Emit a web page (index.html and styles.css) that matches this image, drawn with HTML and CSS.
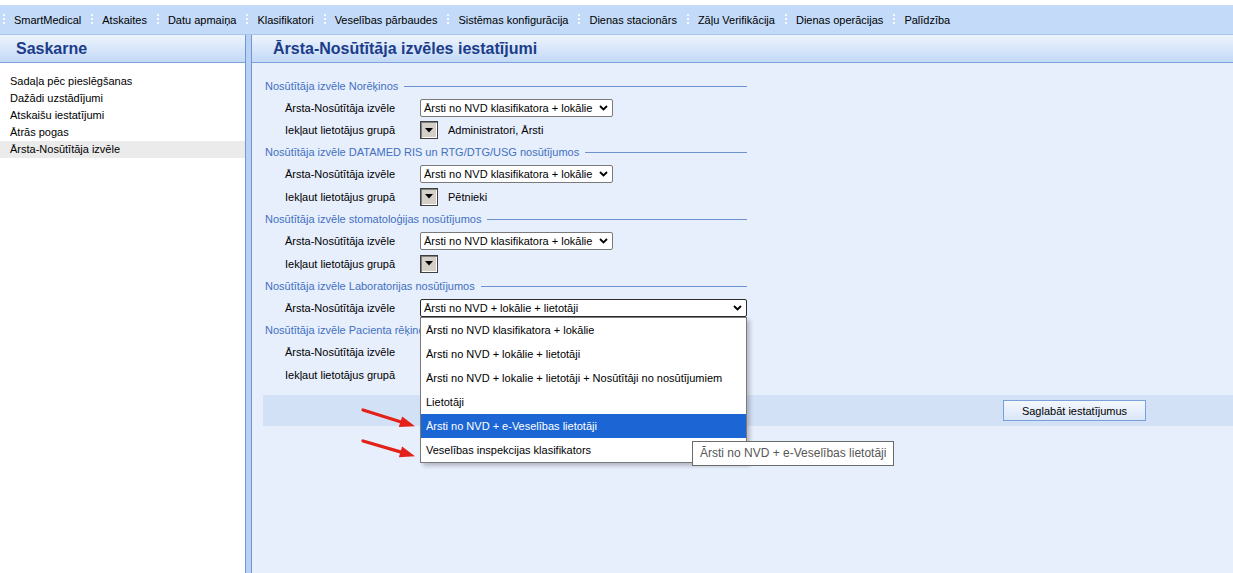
FILE: index.html
```html
<!DOCTYPE html>
<html lang="lv">
<head>
<meta charset="utf-8">
<title>Ārsta-Nosūtītāja izvēles iestatījumi</title>
<link rel="stylesheet" href="styles.css">
</head>
<body>
<nav class="menubar">
  <span class="menu-sep"></span><span class="menu-item">SmartMedical</span>
  <span class="menu-sep"></span><span class="menu-item">Atskaites</span>
  <span class="menu-sep"></span><span class="menu-item">Datu apmaiņa</span>
  <span class="menu-sep"></span><span class="menu-item">Klasifikatori</span>
  <span class="menu-sep"></span><span class="menu-item">Veselības pārbaudes</span>
  <span class="menu-sep"></span><span class="menu-item">Sistēmas konfigurācija</span>
  <span class="menu-sep"></span><span class="menu-item">Dienas stacionārs</span>
  <span class="menu-sep"></span><span class="menu-item">Zāļu Verifikācija</span>
  <span class="menu-sep"></span><span class="menu-item">Dienas operācijas</span>
  <span class="menu-sep"></span><span class="menu-item">Palīdzība</span>
</nav>
<div class="main">
  <aside class="left">
    <div class="panel-head">Saskarne</div>
    <ul class="nav-list">
      <li>Sadaļa pēc pieslēgšanas</li>
      <li>Dažādi uzstādījumi</li>
      <li>Atskaišu iestatījumi</li>
      <li>Ātrās pogas</li>
      <li class="active">Ārsta-Nosūtītāja izvēle</li>
    </ul>
  </aside>
  <div class="splitter"></div>
  <section class="right">
    <div class="panel-head right-head">Ārsta-Nosūtītāja izvēles iestatījumi</div>
    <div class="content">
      <div class="group">
        <div class="legend">Nosūtītāja izvēle Norēķinos</div>
        <div class="row"><span class="label">Ārsta-Nosūtītāja izvēle</span>
          <div class="select"><span>Ārsti no NVD klasifikatora + lokālie</span><svg class="chev" width="9" height="6" viewBox="0 0 9 6"><polyline points="1,1 4.5,4.5 8,1" fill="none" stroke="#000" stroke-width="1.8"/></svg></div></div>
        <div class="row row-grp"><span class="label">Iekļaut lietotājus grupā</span>
          <span class="ddbtn"><svg width="8" height="5" viewBox="0 0 8 5"><polygon points="0,0 8,0 4,4.5" fill="#000"/></svg></span><span class="grp-text">Administratori, Ārsti</span></div>
      </div>
      <div class="group">
        <div class="legend">Nosūtītāja izvēle DATAMED RIS un RTG/DTG/USG nosūtījumos</div>
        <div class="row"><span class="label">Ārsta-Nosūtītāja izvēle</span>
          <div class="select"><span>Ārsti no NVD klasifikatora + lokālie</span><svg class="chev" width="9" height="6" viewBox="0 0 9 6"><polyline points="1,1 4.5,4.5 8,1" fill="none" stroke="#000" stroke-width="1.8"/></svg></div></div>
        <div class="row row-grp"><span class="label">Iekļaut lietotājus grupā</span>
          <span class="ddbtn"><svg width="8" height="5" viewBox="0 0 8 5"><polygon points="0,0 8,0 4,4.5" fill="#000"/></svg></span><span class="grp-text">Pētnieki</span></div>
      </div>
      <div class="group">
        <div class="legend">Nosūtītāja izvēle stomatoloģijas nosūtījumos</div>
        <div class="row"><span class="label">Ārsta-Nosūtītāja izvēle</span>
          <div class="select"><span>Ārsti no NVD klasifikatora + lokālie</span><svg class="chev" width="9" height="6" viewBox="0 0 9 6"><polyline points="1,1 4.5,4.5 8,1" fill="none" stroke="#000" stroke-width="1.8"/></svg></div></div>
        <div class="row row-grp"><span class="label">Iekļaut lietotājus grupā</span>
          <span class="ddbtn"><svg width="8" height="5" viewBox="0 0 8 5"><polygon points="0,0 8,0 4,4.5" fill="#000"/></svg></span></div>
      </div>
      <div class="group">
        <div class="legend">Nosūtītāja izvēle Laboratorijas nosūtījumos</div>
        <div class="row"><span class="label">Ārsta-Nosūtītāja izvēle</span>
          <div class="select-wrap">
            <div class="select select-wide"><span>Ārsti no NVD + lokālie + lietotāji</span><svg class="chev" width="9" height="6" viewBox="0 0 9 6"><polyline points="1,1 4.5,4.5 8,1" fill="none" stroke="#000" stroke-width="1.8"/></svg></div>
            <ul class="dropdown">
              <li>Ārsti no NVD klasifikatora + lokālie</li>
              <li>Ārsti no NVD + lokālie + lietotāji</li>
              <li>Ārsti no NVD + lokalie + lietotāji + Nosūtītāji no nosūtījumiem</li>
              <li>Lietotāji</li>
              <li class="hl">Ārsti no NVD + e-Veselības lietotāji</li>
              <li>Veselības inspekcijas klasifikators</li>
            </ul>
            <div class="tooltip">Ārsti no NVD + e-Veselības lietotāji</div>
          </div>
        </div>
      </div>
      <div class="group">
        <div class="legend">Nosūtītāja izvēle Pacienta rēķinos</div>
        <div class="row"><span class="label">Ārsta-Nosūtītāja izvēle</span>
          <div class="select"></div></div>
        <div class="row row-grp"><span class="label">Iekļaut lietotājus grupā</span>
          <span class="ddbtn"></span></div>
      </div>
      <div class="actions"><button class="save-btn" type="button">Saglabāt iestatījumus</button></div>
    </div>
    <svg class="arrows" width="62" height="62" viewBox="0 0 62 62">
      <line x1="5" y1="8" x2="44" y2="20.2" stroke="#e32119" stroke-width="3.2" stroke-linecap="round"/>
      <polygon points="57,24.3 40.8,25 44.2,14.4" fill="#e32119"/>
      <line x1="5" y1="39" x2="44" y2="50.4" stroke="#e32119" stroke-width="3.2" stroke-linecap="round"/>
      <polygon points="57,54.3 40.9,55.2 44.1,44.6" fill="#e32119"/>
    </svg>
  </section>
</div>
</body>
</html>
```
FILE: styles.css
```css
* { box-sizing: border-box; }
html, body { margin: 0; height: 100%; }
body {
  font-family: "Liberation Sans", Arial, sans-serif;
  font-size: 11px;
  color: #000;
  background: #fff;
  padding-top: 5px;
  overflow: hidden;
}

.menubar {
  height: 30px;
  background: #c3dbf8;
  border-bottom: 1px solid #a8c5ee;
  display: flex;
  align-items: center;
  padding-left: 3px;
}
.menu-sep {
  width: 2px;
  height: 12px;
  background: repeating-linear-gradient(to bottom, #f7faff 0 2px, transparent 2px 4px);
  border-left: 1px solid transparent;
}
.menu-item { padding: 0 10px 0 9px; white-space: nowrap; }

.main { display: flex; height: calc(100% - 30px); }
.left { width: 245px; background: #fff; flex: none; }
.splitter {
  width: 7px;
  flex: none;
  background: #b9d2f4;
  border-left: 1px solid #6f96d6;
  border-right: 1px solid #6f96d6;
}
.right { flex: 1; background: #e7eefc; position: relative; }

.panel-head {
  height: 28px;
  background: linear-gradient(#eef4fd, #c3d9f6);
  border-bottom: 1px solid #7ea3dc;
  font-weight: bold;
  font-size: 16px;
  color: #1b3d8a;
  display: flex;
  align-items: center;
  padding-left: 16px;
}
.right-head { padding-left: 21px; }

.nav-list { list-style: none; margin: 0; padding: 10px 0 0; }
.nav-list li { height: 17px; line-height: 17px; padding-left: 10px; white-space: nowrap; }
.nav-list li.active { background: #ebebeb; }

.content { padding: 12px 0 0 13px; }
.group { width: 482px; }
.legend {
  height: 22px;
  display: flex;
  align-items: center;
  color: #4271c0;
  white-space: nowrap;
}
.legend::after {
  content: "";
  flex: 1;
  border-top: 1px solid #6d92d0;
  margin-left: 6px;
}
.row { height: 22px; display: flex; align-items: center; padding-left: 20px; }
.row-grp { height: 23px; }
.group:first-child .row-grp { height: 22px; }
.label { width: 135px; flex: none; white-space: nowrap; }

.select {
  width: 193px;
  height: 18px;
  border: 1px solid #7a7a7a;
  border-radius: 2px;
  background: #fff;
  display: flex;
  align-items: center;
  justify-content: space-between;
  padding: 0 4px 0 3px;
  white-space: nowrap;
}
.select-wrap { position: relative; }
.select-wide { width: 327px; border-color: #2b2b2b; }

.ddbtn {
  width: 18px;
  height: 18px;
  border: 1px solid #3f3f3f;
  box-shadow: inset 1px 1px 0 #808080, inset -1px -1px 0 #fff;
  background: #d4d0c8;
  display: flex;
  align-items: center;
  justify-content: center;
  flex: none;
}
.grp-text { margin-left: 10px; }

.dropdown {
  position: absolute;
  left: 0;
  top: 18px;
  width: 327px;
  margin: 0;
  padding: 0;
  list-style: none;
  background: #fff;
  border: 1px solid #7a7a7a;
  box-shadow: 3px 3px 4px rgba(0, 0, 0, 0.22);
  z-index: 5;
}
.dropdown li { height: 24px; line-height: 24px; padding-left: 5px; white-space: nowrap; }
.dropdown li.hl { background: #1b66d4; color: #fff; }

.tooltip {
  position: absolute;
  left: 272px;
  top: 142px;
  height: 25px;
  line-height: 23px;
  padding: 0 7px;
  background: #fff;
  border: 1px solid #6b6b6b;
  color: #575757;
  font-size: 12px;
  white-space: nowrap;
  z-index: 6;
}

.actions {
  margin: 9px 0 0 -2px;
  height: 31px;
  background: #d3e1f7;
  display: flex;
  align-items: center;
  justify-content: flex-end;
  padding-right: 87px;
}
.save-btn {
  font-family: inherit;
  font-size: 11px;
  width: 143px;
  height: 21px;
  border: 1px solid #7a9fd9;
  background: linear-gradient(#f4f8fe, #dae6f8);
  color: #000;
  padding: 0;
}

.arrows { position: absolute; left: 106px; top: 367px; z-index: 7; }
```
